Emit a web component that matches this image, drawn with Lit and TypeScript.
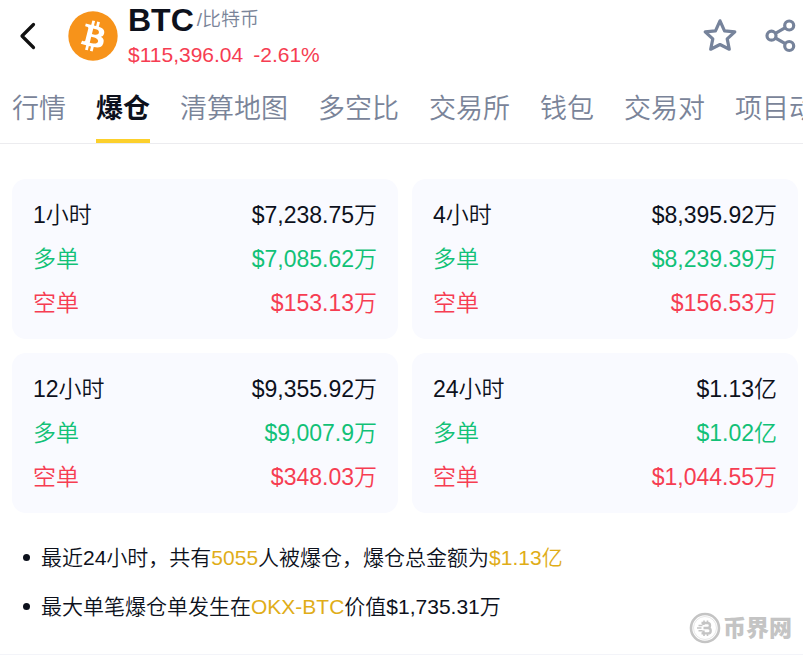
import { LitElement, html, css } from "lit";
import { customElement, property } from "lit/decorators.js";

interface Period {
  title: string;
  total: string;
  long: string;
  short: string;
}

const PERIODS: Period[] = [
  { title: "1小时", total: "$7,238.75万", long: "$7,085.62万", short: "$153.13万" },
  { title: "4小时", total: "$8,395.92万", long: "$8,239.39万", short: "$156.53万" },
  { title: "12小时", total: "$9,355.92万", long: "$9,007.9万", short: "$348.03万" },
  { title: "24小时", total: "$1.13亿", long: "$1.02亿", short: "$1,044.55万" },
];

const TABS = ["行情", "爆仓", "清算地图", "多空比", "交易所", "钱包", "交易对", "项目动态"];

@customElement("period-card")
class PeriodCard extends LitElement {
  @property({ attribute: false }) period!: Period;

  static styles = css`
    :host {
      display: block;
      background: #f9faff;
      border-radius: 14px;
      padding: 14px 21px;
    }
    .rows {
      margin: 0;
    }
    .row {
      display: flex;
      justify-content: space-between;
      font-size: 23px;
      line-height: 44px;
      white-space: nowrap;
    }
    dd {
      margin: 0;
    }
    .long {
      color: #12c177;
    }
    .short {
      color: #f63d52;
    }
  `;

  render() {
    const p = this.period;
    return html`
      <dl class="rows">
        <div class="row"><dt>${p.title}</dt><dd>${p.total}</dd></div>
        <div class="row long"><dt>多单</dt><dd>${p.long}</dd></div>
        <div class="row short"><dt>空单</dt><dd>${p.short}</dd></div>
      </dl>
    `;
  }
}

@customElement("app-root")
class AppRoot extends LitElement {
  static styles = css`
    :host {
      display: block;
      position: relative;
      overflow: hidden;
      background: #fff;
      color: #0d111c;
      font-family: "Liberation Sans", "Noto Sans CJK SC", sans-serif;
      font-weight: 350;
    }
    button {
      border: 0;
      padding: 0;
      background: none;
      color: inherit;
      font: inherit;
      display: block;
    }
    svg {
      display: block;
    }
    header {
      display: flex;
      align-items: center;
      height: 72px;
      padding: 0 5px 0 18px;
    }
    .coin {
      margin: 0 10px 0 30px;
    }
    .info {
      flex: 1;
      padding-top: 2px;
    }
    .name {
      display: flex;
      align-items: center;
      gap: 3px;
      height: 36px;
    }
    h1 {
      margin: 0;
      font-size: 32px;
      line-height: 36px;
      font-weight: 700;
    }
    .alias {
      font-size: 19px;
      line-height: 36px;
      color: #7a8499;
    }
    .price {
      display: flex;
      gap: 10px;
      font-size: 21px;
      line-height: 34px;
      color: #f63d52;
    }
    .actions {
      display: flex;
      gap: 26px;
      color: #76839b;
    }
    nav {
      display: flex;
      gap: 30px;
      padding-left: 12px;
      border-bottom: 1px solid #ececef;
      white-space: nowrap;
      overflow: hidden;
    }
    .tab {
      flex: none;
      display: block;
      height: 71px;
      box-sizing: border-box;
      border-bottom: 4px solid transparent;
      font-size: 27px;
      line-height: 74px;
      color: #7a8499;
      text-decoration: none;
    }
    .active {
      color: #0d111c;
      font-weight: 700;
      border-color: #fcd02c;
    }
    .cards {
      display: grid;
      grid-template-columns: 1fr 1fr;
      gap: 14px;
      padding: 35px 5px 0 12px;
    }
    .notes {
      margin: 0;
      padding: 20px 12px 23px 23px;
      list-style: none;
      border-bottom: 1px solid #f3f4f9;
      font-size: 21px;
      line-height: 49px;
    }
    .notes li {
      display: flex;
      align-items: center;
      gap: 11px;
    }
    .notes li::before {
      content: "";
      flex: none;
      width: 7px;
      height: 7px;
      border-radius: 50%;
      background: #0d111c;
    }
    .gold {
      color: #e0ad18;
    }
    .mark {
      position: absolute;
      right: 11px;
      bottom: 10px;
      display: flex;
      align-items: center;
      gap: 2px;
      color: #c4c4c4;
      font-size: 23px;
      line-height: 34px;
      font-weight: 900;
    }
  `;

  render() {
    return html`
      <header>
        <button aria-label="返回">
          <svg width="20" height="28" viewBox="0 0 20 28" fill="none" stroke="#111" stroke-width="3.2" stroke-linecap="round" stroke-linejoin="round">
            <path d="M15.5 2.5 4 14l11.500 11.500" />
          </svg>
        </button>
        <svg class="coin" width="50" height="50" viewBox="0 0 32 32" aria-hidden="true">
          <circle cx="16" cy="16" r="15.800" fill="#f7931a" />
          <path fill="#fff" d="M23.189 14.020c.314-2.096-1.283-3.223-3.465-3.975l.708-2.840-1.728-.430-.690 2.765c-.454-.114-.920-.220-1.385-.326l.695-2.783L15.596 6l-.708 2.839c-.376-.086-.746-.170-1.104-.260l.002-.009-2.384-.595-.460 1.846s1.283.294 1.256.312c.700.175.826.638.805 1.006l-.806 3.235c.048.012.110.030.180.057l-.183-.045-1.130 4.532c-.086.212-.303.531-.793.410.018.025-1.256-.313-1.256-.313l-.858 1.978 2.250.561c.418.105.828.215 1.231.318l-.715 2.872 1.727.430.708-2.840c.472.127.930.245 1.378.357l-.706 2.828 1.728.430.715-2.866c2.948.558 5.164.333 6.097-2.333.752-2.146-.037-3.385-1.588-4.192 1.130-.260 1.980-1.003 2.207-2.538zm-3.950 5.538c-.533 2.147-4.148.986-5.320.695l.950-3.805c1.172.293 4.929.872 4.370 3.110zm.535-5.569c-.487 1.953-3.495.960-4.470.717l.860-3.450c.975.243 4.118.696 3.610 2.733z" />
        </svg>
        <div class="info">
          <div class="name"><h1>BTC</h1><span class="alias">/比特币</span></div>
          <div class="price"><span>$115,396.04</span><span>-2.61%</span></div>
        </div>
        <div class="actions">
          <button aria-label="收藏">
            <svg width="36" height="36" viewBox="0 0 36 36" fill="none" stroke="currentColor" stroke-width="3.200" stroke-linejoin="round">
              <path d="M18 2.800 22.500 12.800 32.800 13.800 25.200 20.900 27.300 31.200 18 26.500 8.700 31.200 10.800 20.900 3.200 13.800 13.500 12.800Z" />
            </svg>
          </button>
          <button aria-label="分享">
            <svg width="34" height="36" viewBox="0 0 34 36" fill="none" stroke="currentColor" stroke-width="3.200">
              <circle cx="7.500" cy="17.700" r="4.500" />
              <circle cx="25.200" cy="7.500" r="4.500" />
              <circle cx="25.200" cy="28" r="4.500" />
              <path d="m11.400 15.400 9.900-5.700m-9.900 10.300 9.900 5.700" />
            </svg>
          </button>
        </div>
      </header>
      <nav>
        ${TABS.map((t) => html`<a href="#" class=${t === "爆仓" ? "tab active" : "tab"}>${t}</a>`)}
      </nav>
      <section class="cards">
        ${PERIODS.map((p) => html`<period-card .period=${p}></period-card>`)}
      </section>
      <ul class="notes">
        <li><span>最近24小时，共有<span class="gold">5055</span>人被爆仓，爆仓总金额为<span class="gold">$1.13亿</span></span></li>
        <li><span>最大单笔爆仓单发生在<span class="gold">OKX-BTC</span>价值$1,735.31万</span></li>
      </ul>
      <div class="mark">
        <svg width="32" height="32" viewBox="0 0 32 32" fill="none" stroke="currentColor" aria-hidden="true">
          <circle cx="16" cy="16" r="14" stroke-width="2.600" />
          <circle cx="16" cy="16" r="11.500" stroke-width="1" opacity="0.4" />
          <g stroke-width="2.400">
            <path d="M12.500 11h6a2.500 2.500 0 0 1 0 5H14.500m4 0h.5a2.700 2.700 0 0 1 0 5.400H12.500M14.500 11v2m0 5.500v3" />
            <path d="M15 8.500v2.500m3.500-2.500v2.500M15 21.500v2.500m3.500-2.500v2.500" stroke-width="1.600" />
            <path d="M9.500 13.500h4M8 16h4.500M9.500 18.700h4" stroke-width="1.500" />
          </g>
        </svg>
        <span>币界网</span>
      </div>
    `;
  }
}
